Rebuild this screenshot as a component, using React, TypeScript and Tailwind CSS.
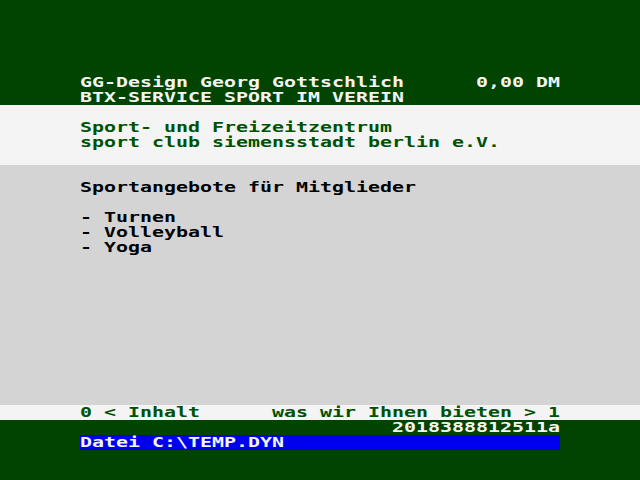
const FONT = "font-['DejaVu_Sans_Mono','Liberation_Mono',monospace]";

// one 40-column BTX row: 12px per cell, 15px high
function Row({ text, className = "" }: { text: string; className?: string }) {
  return (
    <div className={`h-[15px] w-[480px] overflow-visible ${className}`}>
      <div
        className={`${FONT} whitespace-pre font-bold text-[14px] leading-[15px] scale-x-[1.4237] origin-left w-max`}
      >
        {text}
      </div>
    </div>
  );
}

export default function App() {
  return (
    <div className="w-[640px] h-[480px] overflow-hidden bg-[#004400] flex flex-col">
      {/* Header */}
      <div className="h-[105px] flex flex-col justify-end px-[80px] text-[#f4f4f4]">
        <Row text={"GG-Design Georg Gottschlich      0,00 DM"} />
        <Row text="BTX-SERVICE SPORT IM VEREIN" />
      </div>

      {/* Title */}
      <div className="h-[60px] bg-[#f4f4f4] px-[80px] pt-[15px] text-[#005200]">
        <Row text="Sport- und Freizeitzentrum" />
        <Row text="sport club siemensstadt berlin e.V." />
      </div>

      {/* Content */}
      <div className="h-[240px] bg-[#d4d4d4] px-[80px] pt-[15px] text-black">
        <Row text="Sportangebote für Mitglieder" />
        <div className="h-[15px]" />
        <Row text="- Turnen" />
        <Row text="- Volleyball" />
        <Row text="- Yoga" />
      </div>

      {/* Navigation */}
      <div className="h-[15px] bg-[#f4f4f4] px-[80px] text-[#005200]">
        <Row text={"0 < Inhalt      was wir Ihnen bieten > 1"} />
      </div>

      {/* Footer */}
      <div className="px-[80px] text-[#f4f4f4]">
        <Row text={"                          2018388812511a"} />
        <Row text="Datei C:\TEMP.DYN" className="bg-[#0000f0]" />
      </div>
    </div>
  );
}
